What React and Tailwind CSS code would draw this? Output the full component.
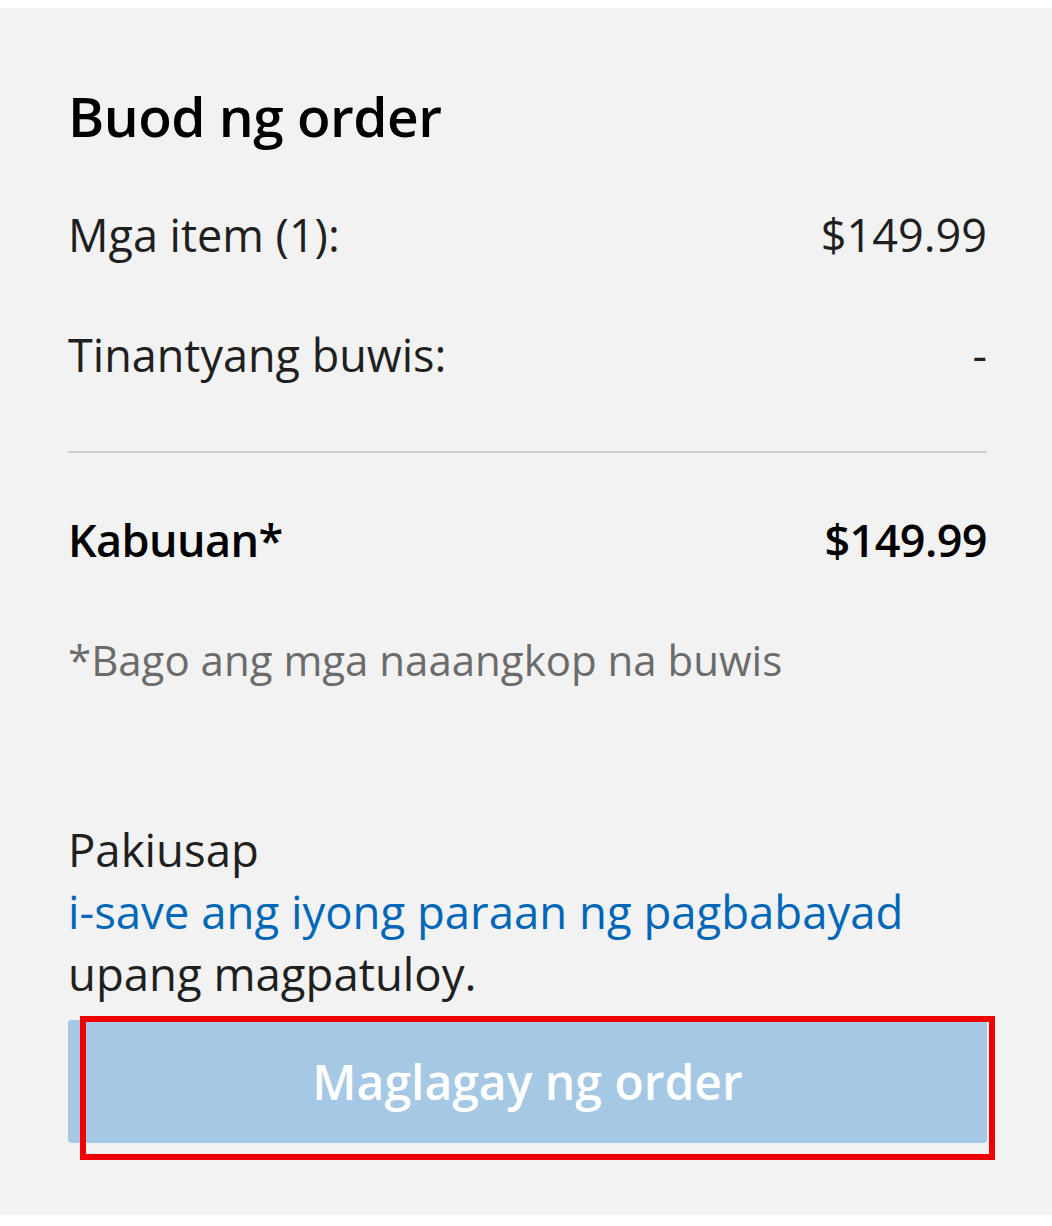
import React from "react";

const rows = [
	{ label: "Mga item (1):", value: "$149.99" },
	{ label: "Tinantyang buwis:", value: "-" },
];

const font = { fontFamily: "'Open Sans', 'Noto Sans', sans-serif" };

const App = () => {
	return (
		<div className="w-[1052px] h-[1226px] bg-white pt-[8px] pb-[11px]" style={font}>
			<div className="h-full bg-[#f2f2f2] pl-[68px] pr-[65px] pt-[70px]">
				{/* Heading */}
				<h2 className="text-[55px] leading-[76px] font-semibold text-black tracking-[-0.5px]">
					Buod ng order
				</h2>

				{/* Line items */}
				<div className="mt-[50px] flex flex-col gap-[58px]">
					{rows.map((row) => (
						<div
							key={row.label}
							className="flex justify-between items-center text-[45px] leading-[62px] text-[#1f1f1f]">
							<span>{row.label}</span>
							<span>{row.value}</span>
						</div>
					))}
				</div>

				<div className="mt-[65px] h-[2px] bg-[#cfcfcf]" />

				{/* Total */}
				<div className="mt-[56px] flex justify-between items-center text-[45px] leading-[62px] font-semibold text-black tracking-[-0.6px]">
					<span>Kabuuan*</span>
					<span>$149.99</span>
				</div>

				<p className="mt-[58px] text-[42px] leading-[62px] text-[#6b6b6b]">
					*Bago ang mga naaangkop na buwis
				</p>

				{/* Payment notice */}
				<p className="mt-[127px] text-[45.5px] leading-[62px] text-[#1f1f1f]">
					Pakiusap
					<br />
					<a href="#" className="text-[#0067b8]">
						i-save ang iyong paraan ng pagbabayad
					</a>
					<br />
					upang magpatuloy.
				</p>

				{/* Place order button */}
				<div className="relative mt-[16px]">
					<button
						disabled
						className="w-full h-[123px] rounded-[4px] bg-[#a5c8e5] text-white text-[48px] font-semibold">
						Maglagay ng order
					</button>
					<div className="absolute left-[12px] -right-[8px] -top-[4px] -bottom-[17px] border-[6px] border-[#f00000] pointer-events-none" />
				</div>
			</div>
		</div>
	);
};

export default App;
